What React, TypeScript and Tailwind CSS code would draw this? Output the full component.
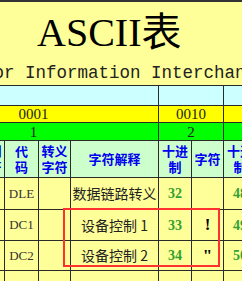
const cjk = "font-['Noto_Sans_CJK_SC',sans-serif]";
const serif = "font-['Liberation_Serif','Noto_Sans_CJK_SC',serif]";

const cell = "border border-[#2a2a2a] p-0 text-center align-middle overflow-hidden";
const head = `${cell} bg-[#ccffcc] text-[13px] leading-[16px] font-bold text-[#0000ee] ${cjk}`;
const body = `${cell} bg-[#ffff99]`;

const rows = [
  { code: "DLE", desc: "数据链路转义", dec: "32", ch: "", dec2: "48", h: "h-[32px]" },
  { code: "DC1", desc: "设备控制 1", dec: "33", ch: "!", dec2: "49", h: "h-[31px]" },
  { code: "DC2", desc: "设备控制 2", dec: "34", ch: '"', dec2: "50", h: "h-[30px]" },
  { code: "DC3", desc: "设备控制 3", dec: "35", ch: "#", dec2: "51", h: "h-[36px]" },
];

export default function App() {
  return (
    <div className="relative w-[242px] h-[281px] overflow-hidden bg-[#ffff99]">
      <div className="ml-[-92px] w-[520px]">
        <div className="h-[85px] border-t-2 border-[#333] bg-[#ffff99]">
          <div className={`ml-[129px] pt-[11px] text-[40px] leading-[40px] text-black ${serif}`}>ASCII表</div>
          <div className="ml-[75px] mt-[11px] whitespace-nowrap text-[17.5px] leading-[18px] text-[#222] font-['Liberation_Mono',monospace]">
            for Information Interchange
          </div>
        </div>
        <table className="table-fixed border-collapse w-[424px]">
          <colgroup>
            <col className="w-[32px]" />
            <col className="w-[32px]" />
            <col className="w-[32px]" />
            <col className="w-[34px]" />
            <col className="w-[32px]" />
            <col className="w-[88px]" />
            <col className="w-[33px]" />
            <col className="w-[32px]" />
            <col className="w-[33px]" />
            <col className="w-[32px]" />
            <col className="w-[44px]" />
          </colgroup>
          <tbody>
            <tr className="h-[20px]">
              <td colSpan={6} className={`${cell} bg-[#ccffff]`}></td>
              <td colSpan={2} className={`${cell} bg-[#ccffff]`}></td>
              <td colSpan={3} className={`${cell} bg-[#ccffff]`}></td>
            </tr>
            <tr className={`h-[17px] text-[15px] leading-[16px] text-[#222] ${serif}`}>
              <td colSpan={6} className={`${cell} bg-[#ffff00]`}>0001</td>
              <td colSpan={2} className={`${cell} bg-[#ffff00]`}>0010</td>
              <td colSpan={3} className={`${cell} bg-[#ffff00]`}>0011</td>
            </tr>
            <tr className={`h-[18px] text-[15px] leading-[16px] text-[#222] ${serif}`}>
              <td colSpan={6} className={`${cell} bg-[#00ff00]`}>1</td>
              <td colSpan={2} className={`${cell} bg-[#00ff00]`}>2</td>
              <td colSpan={3} className={`${cell} bg-[#00ff00]`}>3</td>
            </tr>
            <tr className="h-[37px]">
              <td className={head}>十进<br />制</td>
              <td className={head}>字符</td>
              <td className={head}>控制<br />字符</td>
              <td className={head}>代<br />码</td>
              <td className={head}>转义<br />字符</td>
              <td className={head}>字符解释</td>
              <td className={head}>十进<br />制</td>
              <td className={head}>字符</td>
              <td className={head}>十进<br />制</td>
              <td className={head}>字符</td>
              <td className={head}>代码</td>
            </tr>
            {rows.map((r) => (
              <tr key={r.code} className={r.h}>
                <td className={body}></td>
                <td className={body}></td>
                <td className={body}></td>
                <td className={`${body} text-[13px] text-[#333] ${serif}`}>{r.code}</td>
                <td className={body}></td>
                <td className={`${body} text-[14px] text-[#222] whitespace-nowrap ${cjk}`}>{r.desc}</td>
                <td className={`${body} text-[14px] font-bold text-[#33a033] ${serif}`}>{r.dec}</td>
                <td className={`${body} text-[17px] font-bold text-black ${serif}`}>{r.ch}</td>
                <td className={`${body} text-[14px] font-bold text-[#33a033] ${serif}`}>{r.dec2}</td>
                <td className={body}></td>
                <td className={body}></td>
              </tr>
            ))}
          </tbody>
        </table>
      </div>
      <div className="absolute left-[63px] top-[208px] w-[157px] h-[59px] border-2 border-[#ff3030]" />
    </div>
  );
}
